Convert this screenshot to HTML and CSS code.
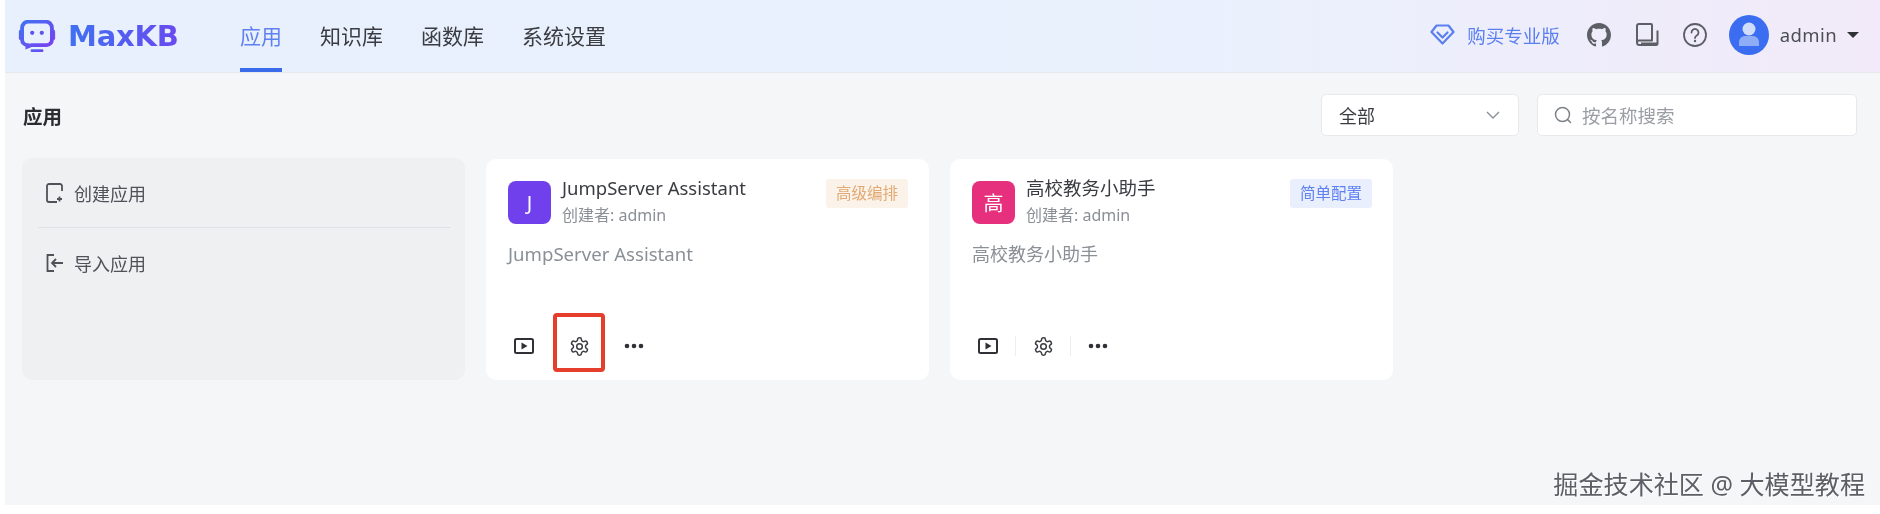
FILE: index.html
```html
<!DOCTYPE html>
<html lang="zh-CN">
<head>
<meta charset="utf-8">
<title>MaxKB</title>
<link rel="stylesheet" href="styles.css">
</head>
<body>
<div class="app">
  <header class="topbar">
    <div class="logo">
      <svg class="logo-icon" viewBox="0 0 34 30" aria-hidden="true">
        <defs><linearGradient id="lg" x1="0" y1="0" x2="1" y2="1"><stop offset="0" stop-color="#3f72f2"/><stop offset="1" stop-color="#7a3ff0"/></linearGradient></defs>
        <rect x="0" y="9" width="4" height="10" rx="2" fill="url(#lg)"/>
        <rect x="30" y="9" width="4" height="10" rx="2" fill="url(#lg)"/>
        <path d="M9 1.500h16a6 6 0 0 1 6 6v11a5 5 0 0 1-5 5H12l-4 1.500V23.500a5 5 0 0 1-5-5V7.500a6 6 0 0 1 6-6z" fill="none" stroke="url(#lg)" stroke-width="3.600"/>
        <circle cx="12.500" cy="12" r="2" fill="#5a55f0"/><circle cx="21.500" cy="12" r="2" fill="#5a55f0"/>
        <rect x="11" y="27.500" width="12" height="2.500" rx="1" fill="url(#lg)"/>
      </svg>
      <span class="logo-text">MaxKB</span>
    </div>
    <nav class="nav">
      <a class="nav-item active">应用</a>
      <a class="nav-item">知识库</a>
      <a class="nav-item">函数库</a>
      <a class="nav-item">系统设置</a>
    </nav>
    <div class="top-right">
      <a class="upgrade">
        <svg class="diamond" viewBox="0 0 25 21" aria-hidden="true"><path d="M6.500 1.500h12l5 6.500-11 11.500L1.500 8z" fill="none" stroke="currentColor" stroke-width="2.200" stroke-linejoin="round"/><path d="M7.500 8.500l5 5 5-5" fill="none" stroke="currentColor" stroke-width="2.200" stroke-linecap="round" stroke-linejoin="round"/></svg>
        <span>购买专业版</span>
      </a>
      <svg class="top-icon" viewBox="0 0 16 16" aria-hidden="true"><path fill="#5c5f66" d="M8 0C3.58 0 0 3.58 0 8c0 3.54 2.29 6.53 5.47 7.59.4.07.55-.17.55-.38 0-.19-.01-.82-.01-1.49-2.01.37-2.53-.49-2.69-.94-.09-.23-.48-.94-.82-1.13-.28-.15-.68-.52-.01-.53.63-.01 1.08.58 1.23.82.72 1.21 1.87.87 2.33.66.07-.52.28-.87.51-1.07-1.78-.2-3.64-.89-3.64-3.95 0-.87.31-1.59.82-2.15-.08-.2-.36-1.02.08-2.12 0 0 .67-.21 2.2.82.64-.18 1.32-.27 2-.27.68 0 1.36.09 2 .27 1.53-1.04 2.2-.82 2.2-.82.44 1.1.16 1.92.08 2.12.51.56.82 1.27.82 2.15 0 3.07-1.87 3.75-3.65 3.95.29.25.54.73.54 1.48 0 1.07-.01 1.93-.01 2.2 0 .21.15.46.55.38A8.013 8.013 0 0016 8c0-4.42-3.58-8-8-8z"/></svg>
      <svg class="top-icon" viewBox="0 0 24 24" aria-hidden="true"><path d="M2 19.500V3a2 2 0 0 1 2-2h12a1 1 0 0 1 1 1v15.500H4a2 2 0 0 0-2 2 2.500 2.500 0 0 0 2.500 2.500H21a1.500 1.500 0 0 0 1.500-1.500V7.500M6 20.500h16" fill="none" stroke="#5c5f66" stroke-width="2" stroke-linejoin="round"/></svg>
      <svg class="top-icon" viewBox="0 0 24 24" aria-hidden="true"><circle cx="12" cy="12" r="11" fill="none" stroke="#5c5f66" stroke-width="1.800"/><path d="M8.500 9.500a3.500 3.500 0 1 1 5.300 3c-1.200.7-1.800 1.300-1.800 2.500" fill="none" stroke="#5c5f66" stroke-width="1.800" stroke-linecap="round"/><circle cx="12" cy="18" r="1.200" fill="#5c5f66"/></svg>
      <div class="user">
        <div class="avatar">
          <svg viewBox="0 0 40 40" aria-hidden="true"><circle cx="20" cy="14" r="6.500" fill="#cfdcfb"/><path d="M10 31v-4a6 6 0 0 1 6-6h8a6 6 0 0 1 6 6v4z" fill="#8fadf7"/></svg>
        </div>
        <span class="user-name">admin</span>
        <span class="caret"></span>
      </div>
    </div>
  </header>

  <main class="main">
    <div class="toolbar">
      <h1 class="page-title">应用</h1>
      <div class="filters">
        <div class="select">
          <span>全部</span>
          <svg class="chev" viewBox="0 0 14 8" aria-hidden="true"><path d="M1 1l6 6 6-6" fill="none" stroke="#8b8f96" stroke-width="1.400"/></svg>
        </div>
        <div class="search">
          <svg class="search-icon" viewBox="0 0 18 18" aria-hidden="true"><circle cx="8.500" cy="8.500" r="7" fill="none" stroke="#7d8188" stroke-width="1.500"/><path d="M13.500 13.500l3 3" stroke="#7d8188" stroke-width="1.500" stroke-linecap="round"/></svg>
          <span class="placeholder">按名称搜索</span>
        </div>
      </div>
    </div>

    <div class="grid">
      <section class="create-card">
        <div class="create-row">
          <svg class="create-icon" viewBox="0 0 17 20" aria-hidden="true"><path d="M16 8V3a2 2 0 0 0-2-2H3a2 2 0 0 0-2 2v14a2 2 0 0 0 2 2h8" fill="none" stroke="#4f5258" stroke-width="1.800"/><path d="M11 16h5M13.500 13.500v5" stroke="#4f5258" stroke-width="1.800"/></svg>
          <span>创建应用</span>
        </div>
        <div class="create-sep"></div>
        <div class="create-row">
          <svg class="create-icon" viewBox="0 0 17 20" aria-hidden="true"><path d="M8 2H1.500v16H8" fill="none" stroke="#4f5258" stroke-width="1.800"/><path d="M17 10H6M10 6l-4 4 4 4" fill="none" stroke="#4f5258" stroke-width="1.800"/></svg>
          <span>导入应用</span>
        </div>
      </section>

      <article class="card">
        <div class="card-head">
          <div class="app-icon purple">J</div>
          <div class="card-meta">
            <div class="card-title">JumpServer Assistant</div>
            <div class="card-sub">创建者: admin</div>
          </div>
          <span class="tag tag-orange">高级编排</span>
        </div>
        <p class="card-desc latin">JumpServer Assistant</p>
        <div class="actions plain">
          <span class="action"><svg class="act-icon" viewBox="0 0 20 16" aria-hidden="true"><rect x="1" y="1" width="18" height="14" rx="1.500" fill="none" stroke="#2f3136" stroke-width="2"/><path d="M7.500 4.500l6 3.500-6 3.500z" fill="#2f3136"/></svg></span>
          <span class="action"><svg class="act-icon gear" viewBox="0 0 24 24" aria-hidden="true"><path d="M12.220 2h-.44a2 2 0 0 0-2 2v.18a2 2 0 0 1-1 1.730l-.43.250a2 2 0 0 1-2 0l-.15-.08a2 2 0 0 0-2.730.730l-.22.380a2 2 0 0 0 .730 2.730l.15.1a2 2 0 0 1 1 1.720v.51a2 2 0 0 1-1 1.740l-.15.09a2 2 0 0 0-.730 2.730l.22.380a2 2 0 0 0 2.730.730l.15-.08a2 2 0 0 1 2 0l.43.250a2 2 0 0 1 1 1.730V20a2 2 0 0 0 2 2h.44a2 2 0 0 0 2-2v-.18a2 2 0 0 1 1-1.730l.43-.250a2 2 0 0 1 2 0l.15.08a2 2 0 0 0 2.730-.730l.22-.39a2 2 0 0 0-.730-2.730l-.15-.08a2 2 0 0 1-1-1.740v-.5a2 2 0 0 1 1-1.740l.15-.09a2 2 0 0 0 .730-2.730l-.22-.380a2 2 0 0 0-2.730-.730l-.15.08a2 2 0 0 1-2 0l-.43-.250a2 2 0 0 1-1-1.730V4a2 2 0 0 0-2-2z" fill="none" stroke="#3a3c41" stroke-width="1.700"/><circle cx="12" cy="12" r="3.200" fill="none" stroke="#3a3c41" stroke-width="1.700"/></svg></span>
          <span class="action"><svg class="act-icon" viewBox="0 0 20 6" aria-hidden="true"><circle cx="3" cy="3" r="2.300" fill="#2f3136"/><circle cx="10" cy="3" r="2.300" fill="#2f3136"/><circle cx="17" cy="3" r="2.300" fill="#2f3136"/></svg></span>
        </div>
        <div class="highlight"></div>
      </article>

      <article class="card">
        <div class="card-head">
          <div class="app-icon pink">高</div>
          <div class="card-meta">
            <div class="card-title">高校教务小助手</div>
            <div class="card-sub">创建者: admin</div>
          </div>
          <span class="tag tag-blue">简单配置</span>
        </div>
        <p class="card-desc">高校教务小助手</p>
        <div class="actions">
          <span class="action"><svg class="act-icon" viewBox="0 0 20 16" aria-hidden="true"><rect x="1" y="1" width="18" height="14" rx="1.500" fill="none" stroke="#2f3136" stroke-width="2"/><path d="M7.500 4.500l6 3.500-6 3.500z" fill="#2f3136"/></svg></span>
          <span class="action"><svg class="act-icon gear" viewBox="0 0 24 24" aria-hidden="true"><path d="M12.220 2h-.44a2 2 0 0 0-2 2v.18a2 2 0 0 1-1 1.730l-.43.250a2 2 0 0 1-2 0l-.15-.08a2 2 0 0 0-2.730.730l-.22.380a2 2 0 0 0 .730 2.730l.15.1a2 2 0 0 1 1 1.720v.51a2 2 0 0 1-1 1.740l-.15.09a2 2 0 0 0-.730 2.730l.22.380a2 2 0 0 0 2.730.730l.15-.08a2 2 0 0 1 2 0l.43.250a2 2 0 0 1 1 1.730V20a2 2 0 0 0 2 2h.44a2 2 0 0 0 2-2v-.18a2 2 0 0 1 1-1.730l.43-.250a2 2 0 0 1 2 0l.15.08a2 2 0 0 0 2.730-.730l.22-.39a2 2 0 0 0-.730-2.730l-.15-.08a2 2 0 0 1-1-1.740v-.5a2 2 0 0 1 1-1.740l.15-.09a2 2 0 0 0 .730-2.730l-.22-.380a2 2 0 0 0-2.730-.730l-.15.08a2 2 0 0 1-2 0l-.43-.250a2 2 0 0 1-1-1.730V4a2 2 0 0 0-2-2z" fill="none" stroke="#3a3c41" stroke-width="1.700"/><circle cx="12" cy="12" r="3.200" fill="none" stroke="#3a3c41" stroke-width="1.700"/></svg></span>
          <span class="action"><svg class="act-icon" viewBox="0 0 20 6" aria-hidden="true"><circle cx="3" cy="3" r="2.300" fill="#2f3136"/><circle cx="10" cy="3" r="2.300" fill="#2f3136"/><circle cx="17" cy="3" r="2.300" fill="#2f3136"/></svg></span>
        </div>
      </article>
    </div>
  </main>
  <div class="watermark">掘金技术社区 @ 大模型教程</div>
</div>
</body>
</html>
```

FILE: styles.css
```css
* { box-sizing: border-box; }
html, body { margin: 0; height: 100%; background: #fff; overflow: hidden; }
body { font-family: "Noto Sans", "Noto Sans CJK SC", sans-serif; color: #3a3c41; }

.app { position: relative; margin-left: 5px; height: 505px; background: #f4f6f8; filter: blur(0.4px); }

.topbar {
  display: flex; align-items: center; height: 73px; padding: 0 21px 0 12px;
  background: linear-gradient(90deg, #e9f0fd 0%, #e9f1fd 60%, #f2eaf9 100%);
  border-bottom: 1px solid #e6e8ec;
}
.logo { display: flex; align-items: center; width: 223px; }
.logo-icon { width: 40px; height: 32px; margin-right: 11px; }
.logo-text {
  font-family: "DejaVu Sans", sans-serif; font-weight: 700; font-size: 29px; letter-spacing: -0.2px;
  background: linear-gradient(100deg, #3f72f2, #6a48f0);
  -webkit-background-clip: text; background-clip: text; color: transparent;
}
.nav { display: flex; gap: 38px; height: 100%; }
.nav-item {
  display: flex; align-items: center; height: 100%; font-size: 21px; color: #3a3c41;
  border-bottom: 4px solid transparent; padding-top: 2px;
}
.nav-item.active { color: #5f80f2; border-bottom-color: #3a6bea; }

.top-right { display: flex; align-items: center; margin-left: auto; margin-bottom: 3px; }
.upgrade { display: flex; align-items: center; color: #5a7ff0; font-size: 18.5px; margin-right: 27px; }
.diamond { width: 25px; height: 21px; margin-right: 12px; }
.top-icon { width: 24px; height: 24px; margin-right: 24px; }
.user { display: flex; align-items: center; margin-left: -2px; }
.avatar { width: 40px; height: 40px; border-radius: 50%; background: #3a6df0; overflow: hidden; }
.avatar svg { display: block; width: 40px; height: 40px; }
.user-name { margin-left: 11px; font-size: 18.5px; color: #4b4e55; letter-spacing: .4px; }
.caret { width: 0; height: 0; margin-left: 10px; border-style: solid; border-width: 6px 6px 0; border-color: #2f3136 transparent transparent; }

.main { padding: 21px 23px 0 17px; }
.toolbar { display: flex; align-items: center; justify-content: space-between; height: 42px; }
.page-title { margin: 0; padding-left: 1px; font-size: 19.5px; font-weight: 700; color: #2b2d31; }
.filters { display: flex; gap: 18px; }
.select, .search {
  display: flex; align-items: center; height: 42px; background: #fff; border: 1px solid #e7e9ed; border-radius: 5px;
}
.select { width: 198px; padding: 0 18px 0 17px; justify-content: space-between; font-size: 18px; color: #3a3c41; }
.chev { width: 14px; height: 8px; }
.search { width: 320px; padding-left: 16px; }
.search-icon { width: 18px; height: 18px; margin-right: 10px; }
.placeholder { font-size: 18.5px; color: #9a9da3; }

.grid { display: grid; grid-template-columns: repeat(3, 443px); gap: 21px; margin-top: 22px; align-items: end; }
.create-card { height: 222px; background: #eef0f2; border-radius: 10px; padding: 15px 14px 0 16px; }
.create-row { display: flex; align-items: center; height: 40px; padding-left: 8px; font-size: 18px; color: #4f5258; }
.create-icon { width: 17px; height: 20px; margin-right: 11px; }
.create-sep { height: 1px; margin: 14px 0 15px; background: #e0e2e6; }

.card { position: relative; display: flex; flex-direction: column; height: 221px; background: #fff; border-radius: 10px; padding: 13px 22px 0; }
.card-head { display: flex; align-items: flex-start; }
.app-icon {
  display: flex; align-items: center; justify-content: center; flex: none; width: 43px; height: 43px; margin-top: 9px;
  border-radius: 8px; color: #fff; font-size: 20px;
}
.purple { background: #7040ec; }
.pink { background: #e62f7d; }
.card-meta { flex: 1; margin-left: 11px; }
.card-title { font-size: 18.5px; line-height: 31px; color: #3a3c41; }
.card-sub { font-size: 16px; line-height: 24px; color: #8b8f96; }
.tag { margin-top: 7px; margin-right: -1px; padding: 0 10px; height: 29px; line-height: 29px; font-size: 15.5px; border-radius: 3px; }
.tag-orange { background: #fbf3ea; color: #e2a973; }
.tag-blue { background: #e9effd; color: #5f80f2; }
.card-desc { margin: 14px 0 0; font-size: 18px; line-height: 26px; color: #8b8f96; }
.card-desc.latin { font-size: 18.6px; }

.actions { display: flex; align-items: center; position: absolute; left: 10px; top: 173px; height: 28px; }
.action { display: flex; align-items: center; justify-content: center; width: 55px; height: 20px; }
.action + .action { border-left: 1px solid #eceef1; }
.actions.plain .action + .action { border-left-color: transparent; }
.act-icon { width: 20px; height: 16px; }
.act-icon.gear { width: 21px; height: 21px; }

.highlight { position: absolute; left: 67px; top: 154px; width: 52px; height: 59px; border: 4px solid #e53e2d; border-radius: 4px; }

.watermark {
  position: absolute; right: 15px; top: 467px; font-size: 25.1px; line-height: 34px; color: #5c5f65; white-space: nowrap;
  text-shadow: 1px 1px 1px #fff;
}
```
